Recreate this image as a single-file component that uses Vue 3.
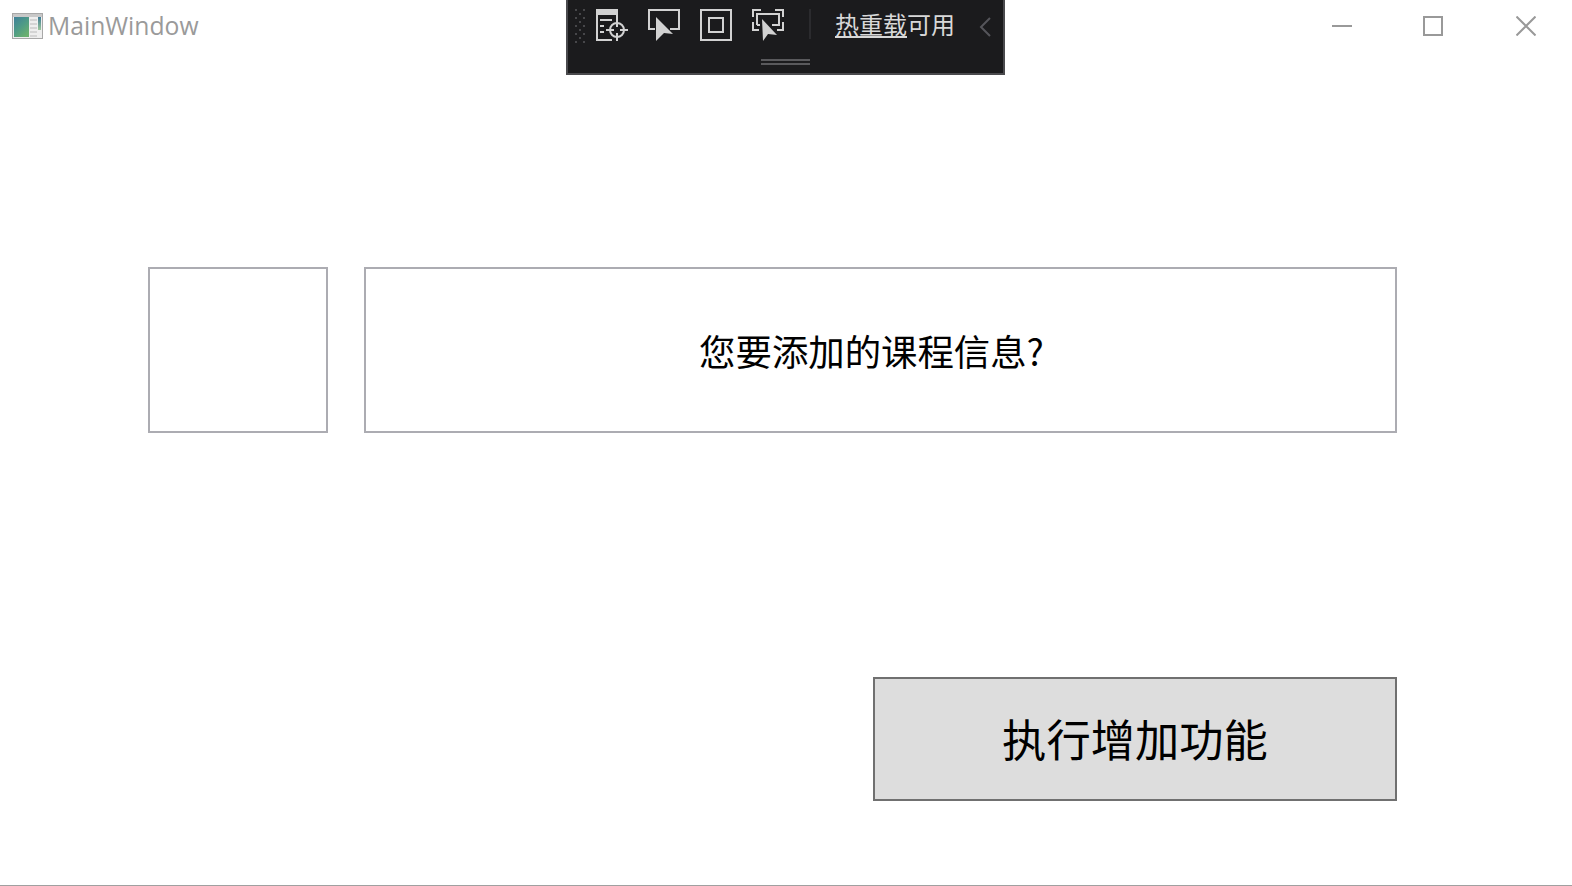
<script setup>
const dots = []
for (let row = 0; row < 9; row++) {
  const y = 0 + row * 4
  if (row % 2 === 0) {
    dots.push({ x: 1, y }, { x: 9, y })
  } else {
    dots.push({ x: 5, y })
  }
}
</script>

<template>
  <div class="window">
    <header class="titlebar">
      <div class="brand">
        <svg class="app-icon" width="31" height="26" viewBox="0 0 31 26">
          <defs>
            <linearGradient id="pane" x1="0" y1="0" x2="0.7" y2="1">
              <stop offset="0" stop-color="#3f7f99" />
              <stop offset="0.55" stop-color="#4f9c86" />
              <stop offset="1" stop-color="#6bb06f" />
            </linearGradient>
            <linearGradient id="side" x1="0" y1="0" x2="0" y2="1">
              <stop offset="0" stop-color="#3b7a95" />
              <stop offset="1" stop-color="#9cc79a" />
            </linearGradient>
          </defs>
          <rect x="0.5" y="0.5" width="30" height="25" fill="#eeeeee" stroke="#a8a8a8" />
          <rect x="1" y="1" width="29" height="3" fill="#c8c8c8" />
          <rect x="2" y="4" width="15" height="20" fill="url(#pane)" />
          <rect x="18" y="6" width="7" height="2" fill="#d4d4d4" />
          <rect x="18" y="10" width="7" height="2" fill="#d4d4d4" />
          <rect x="18" y="14" width="7" height="2" fill="#d4d4d4" />
          <rect x="18" y="18" width="7" height="2" fill="#d4d4d4" />
          <rect x="18" y="22" width="7" height="2" fill="#d4d4d4" />
          <rect x="26" y="4" width="3" height="13" fill="url(#side)" />
        </svg>
        <span class="title">MainWindow</span>
      </div>
      <div class="controls">
        <button class="ctl">
          <svg width="20" height="20" viewBox="0 0 20 20"><path d="M0 10h20" stroke="#999" stroke-width="2" fill="none" /></svg>
        </button>
        <button class="ctl mid">
          <svg width="20" height="20" viewBox="0 0 20 20"><rect x="1" y="1" width="18" height="18" stroke="#999" stroke-width="2" fill="none" /></svg>
        </button>
        <button class="ctl">
          <svg width="20" height="20" viewBox="0 0 20 20"><path d="M0.5 0.5 19.5 19.5M19.5 0.5 0.5 19.5" stroke="#999" stroke-width="2" fill="none" /></svg>
        </button>
      </div>
    </header>

    <div class="debugbar">
      <svg class="grip" width="12" height="34" viewBox="0 0 12 34">
        <rect v-for="(d, i) in dots" :key="i" :x="d.x" :y="d.y" width="2" height="2" fill="#47474a" />
      </svg>
      <svg class="tool first" width="33" height="32" viewBox="0 0 33 32">
        <path d="M0 0h22v6H0z" fill="#d2d2d2" />
        <path d="M1 6v25h15M21 6v5M4 11h12M4 17h4M4 23h4" stroke="#d2d2d2" stroke-width="2" fill="none" />
        <circle cx="21" cy="21" r="7" stroke="#d2d2d2" stroke-width="2" fill="#1b1b1d" />
        <path d="M21 10v8M21 24v8M10 21h8M24 21h8" stroke="#d2d2d2" stroke-width="2" fill="none" />
      </svg>
      <svg class="tool" width="33" height="32" viewBox="0 0 33 32">
        <path d="M7 20H1V1h30v19h-9" stroke="#d2d2d2" stroke-width="2" fill="none" />
        <path d="M8 8 25 25 16 24 8 32z" fill="#d2d2d2" />
      </svg>
      <svg class="tool" width="33" height="32" viewBox="0 0 33 32">
        <rect x="1" y="1" width="30" height="30" stroke="#d2d2d2" stroke-width="2" fill="none" />
        <rect x="9" y="9" width="14" height="14" stroke="#d2d2d2" stroke-width="2" fill="none" />
      </svg>
      <svg class="tool" width="33" height="32" viewBox="0 0 33 32">
        <path d="M1 8V1h8M23 1h8v7M1 13v8h6M31 13v8h-6" stroke="#d2d2d2" stroke-width="2" fill="none" />
        <path d="M5 16V5h22v11h-7M5 16h3" stroke="#d2d2d2" stroke-width="2" fill="none" />
        <path d="M10 10 25 26 16 25 11 32z" fill="#d2d2d2" />
      </svg>
      <span class="sep"></span>
      <span class="hot"><u>热重载</u>可用</span>
      <svg class="chev" width="12" height="20" viewBox="0 0 12 20">
        <path d="M11 1 2 10l9 9" stroke="#55555a" stroke-width="2" fill="none" />
      </svg>
      <div class="handle"></div>
    </div>

    <main class="content">
      <section class="top-row">
        <div class="box small"></div>
        <div class="box wide"><span class="question">您要添加的课程信息?</span></div>
      </section>
      <section class="action-row">
        <button class="action">执行增加功能</button>
      </section>
    </main>
  </div>
</template>

<style>
html, body { margin: 0; padding: 0; background: #fff; overflow: hidden; }
</style>

<style scoped>
.window {
  position: relative;
  width: 1572px;
  height: 886px;
  box-sizing: border-box;
  background: #fff;
  display: flex;
  flex-direction: column;
  border-bottom: 1px solid #a0a0a0;
  font-family: "Noto Sans CJK SC", "Noto Sans", sans-serif;
  overflow: hidden;
}
.titlebar {
  height: 52px;
  flex: none;
  display: flex;
  justify-content: space-between;
  align-items: stretch;
}
.brand {
  display: flex;
  align-items: center;
  padding-left: 12px;
}
.app-icon { display: block; }
.title {
  margin-left: 5px;
  font-family: "Open Sans", sans-serif;
  font-size: 24.7px;
  line-height: 52px;
  color: #9a9a9a;
}
.controls { display: flex; }
.ctl {
  width: 92px;
  border: 0;
  padding: 0;
  background: transparent;
  display: flex;
  align-items: center;
  justify-content: center;
}
.ctl.mid { padding-right: 2px; }
.debugbar {
  position: absolute;
  left: 566px;
  top: 0;
  width: 439px;
  height: 75px;
  box-sizing: border-box;
  background: #1b1b1d;
  border: 2px solid #4a4a4d;
  border-top: 0;
  display: flex;
  align-items: flex-start;
  padding-top: 9px;
  color: #d8d8d8;
}
.grip { margin-left: 6px; flex: none; }
.tool { flex: none; margin-left: 19px; display: block; }
.tool.first { margin-left: 10px; }
.sep {
  width: 2px;
  height: 30px;
  background: #2b2b2e;
  margin-left: 24px;
  flex: none;
}
.hot {
  margin-left: 24px;
  margin-top: -2px;
  font-size: 24px;
  line-height: 34px;
  white-space: nowrap;
  font-weight: 400;
}
.chev { margin: 8px 0 0 24px; flex: none; }
.handle {
  position: absolute;
  left: 193px;
  top: 59px;
  width: 49px;
  height: 6px;
  box-sizing: border-box;
  border-top: 2px solid #59595c;
  border-bottom: 2px solid #59595c;
}
.content {
  flex: 1;
  display: flex;
  flex-direction: column;
  padding: 215px 175px 0 148px;
}
.top-row {
  display: flex;
  gap: 36px;
  height: 166px;
}
.box {
  box-sizing: border-box;
  border: 2px solid #acacb2;
  background: #fff;
}
.small { width: 180px; flex: none; }
.wide {
  flex: 1;
  display: flex;
  align-items: center;
  justify-content: center;
  padding-right: 18px;
}
.question {
  font-size: 36.4px;
  line-height: 48px;
  color: #000;
  font-weight: 400;
}
.action-row {
  margin-top: 244px;
  display: flex;
  justify-content: flex-end;
}
.action {
  width: 524px;
  height: 124px;
  box-sizing: border-box;
  border: 2px solid #707070;
  background: #dddddd;
  color: #000;
  font-family: inherit;
  font-size: 44.3px;
  font-weight: 400;
  padding: 0 0 3px;
}
</style>
